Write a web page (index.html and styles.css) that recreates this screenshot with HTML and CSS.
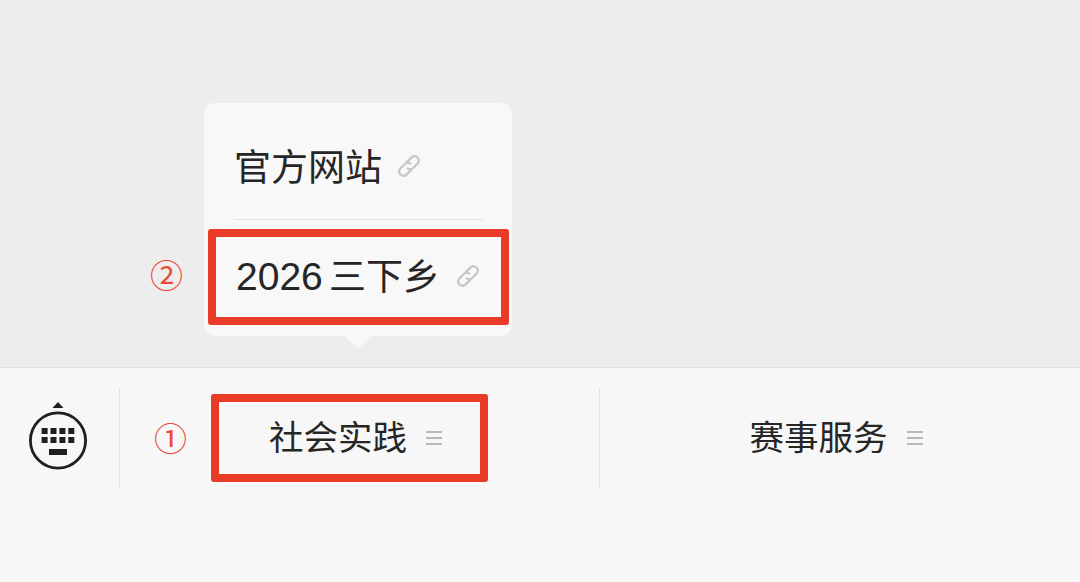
FILE: index.html
```html
<!DOCTYPE html>
<html lang="zh">
<head>
<meta charset="utf-8">
<title>菜单</title>
<link rel="stylesheet" href="styles.css">
</head>
<body>
<main class="stage">
  <div class="popup">
    <div class="popup-row first">
      <span class="popup-label">官方网站</span>
      <svg class="link-icon" viewBox="0 0 24 24"><g fill="none" stroke="#c6c6c6" stroke-width="2" stroke-linecap="round"><path d="M10.2 8.2 14.6 3.800a4 4 0 0 1 5.600 5.600l-4.400 4.400a4 4 0 0 1-5 .5"/><path d="M13.800 15.800 9.400 20.200a4 4 0 0 1-5.600-5.600l4.400-4.400a4 4 0 0 1 5-.5"/></g></svg>
    </div>
    <div class="popup-row second">
      <span class="popup-label"><span class="num">2026</span> 三下乡</span>
      <svg class="link-icon" viewBox="0 0 24 24"><g fill="none" stroke="#c6c6c6" stroke-width="2" stroke-linecap="round"><path d="M10.2 8.2 14.6 3.800a4 4 0 0 1 5.600 5.600l-4.400 4.400a4 4 0 0 1-5 .5"/><path d="M13.800 15.800 9.400 20.200a4 4 0 0 1-5.600-5.600l4.400-4.400a4 4 0 0 1 5-.5"/></g></svg>
    </div>
  </div>
  <div class="popup-arrow"></div>
  <div class="mark mark-two"></div>
  <div class="mark mark-one"></div>
  <span class="step step-two">②</span>
  <span class="step step-one">①</span>
  <nav class="bar">
    <div class="kbd-cell">
      <svg class="kbd-icon" width="60" height="68" viewBox="0 0 60 68">
        <path d="M30 0l5.500 6h-11z" fill="#1f1f1f"/>
        <circle cx="30" cy="38.500" r="27.600" fill="none" stroke="#1f1f1f" stroke-width="2.800"/>
        <g fill="#1f1f1f">
          <rect x="13.600" y="26" width="6" height="6"/><rect x="22.500" y="26" width="6" height="6"/><rect x="31.400" y="26" width="6" height="6"/><rect x="40.300" y="26" width="6" height="6"/>
          <rect x="13.600" y="35" width="6" height="6"/><rect x="22.500" y="35" width="6" height="6"/><rect x="31.400" y="35" width="6" height="6"/><rect x="40.300" y="35" width="6" height="6"/>
          <rect x="21" y="47" width="18" height="6"/>
        </g>
      </svg>
    </div>
    <div class="menu-cell">
      <span class="menu-label">社会实践</span>
      <span class="burger"><i></i><i></i><i></i></span>
    </div>
    <div class="menu-cell">
      <span class="menu-label">赛事服务</span>
      <span class="burger"><i></i><i></i><i></i></span>
    </div>
  </nav>
</main>
</body>
</html>
```
FILE: styles.css
```css
* { box-sizing: border-box; }
html, body { margin: 0; height: 100%; }
body {
  background: #ededed;
  font-family: "Liberation Sans", "Noto Sans CJK SC", sans-serif;
  color: #262626;
  overflow: hidden;
}
.stage {
  position: relative;
  width: 1080px;
  height: 582px;
  display: flex;
  flex-direction: column;
  justify-content: flex-end;
}
.bar {
  height: 215px;
  background: #f7f7f7;
  border-top: 1px solid #dedede;
  display: flex;
  align-items: flex-start;
  padding-top: 20px;
}
.kbd-cell {
  width: 120px;
  height: 100px;
  border-right: 1px solid #e2e2e2;
  display: flex;
  align-items: flex-start;
  justify-content: center;
  padding: 14px 3px 0 0;
}
.kbd-icon { display: block; }
.menu-cell {
  width: 480px;
  height: 100px;
  border-right: 1px solid #e2e2e2;
  display: flex;
  align-items: center;
  justify-content: center;
  gap: 19px;
  padding-right: 8px;
}
.menu-cell:last-child { border-right: 0; }
.menu-label { font-size: 34.500px; line-height: 1; }
.burger { display: flex; flex-direction: column; gap: 4px; width: 16px; }
.burger i { display: block; height: 2px; background: #b9b9b9; }
.popup {
  position: absolute;
  left: 204px;
  top: 103px;
  width: 308px;
  height: 233px;
  background: #f8f8f8;
  border-radius: 11px;
  padding: 0 28px 0 30px;
}
.popup-row {
  display: flex;
  align-items: center;
  gap: 14px;
  margin-left: 2px;
}
.popup-row.first {
  height: 117px;
  border-bottom: 1px solid #e4e4e4;
  margin-left: 0;
  padding-top: 14px;
}
.popup-row.second { height: 112px; gap: 15px; }
.popup-label { font-size: 37px; line-height: 1; white-space: nowrap; word-spacing: -4px; }
.num { font-size: 39px; }
.first .link-icon { margin-top: -4px; }
.link-icon { width: 26px; height: 26px; flex: none; }
.popup-arrow {
  position: absolute;
  left: 345px;
  top: 336px;
  width: 0;
  height: 0;
  border-left: 13px solid transparent;
  border-right: 13px solid transparent;
  border-top: 13px solid #f8f8f8;
}
.mark {
  position: absolute;
  border: 8px solid #ea3a28;
  border-radius: 3px;
  z-index: 2;
}
.mark-two { left: 208px; top: 229px; width: 301px; height: 96px; }
.mark-one { left: 211px; top: 394px; width: 277px; height: 88px; }
.step {
  position: absolute;
  color: #ee4a35;
  font-size: 33px;
  line-height: 1;
  z-index: 2;
}
.step-two { left: 150px; top: 260px; }
.step-one { left: 154px; top: 423px; }
```
